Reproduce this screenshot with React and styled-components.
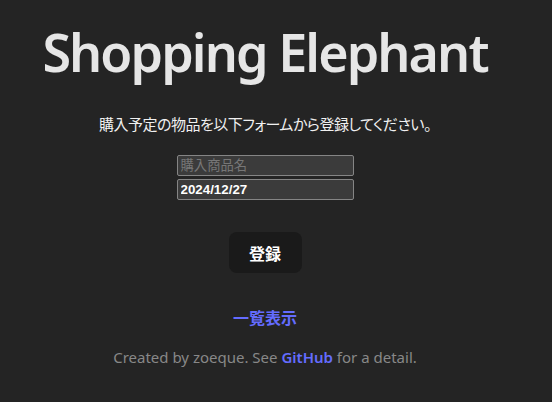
import React from "react";
import styled, { createGlobalStyle } from "styled-components";

const Global = createGlobalStyle`
  html, body { margin: 0; padding: 0; background: #242424; }
  body {
    font-family: "Noto Sans", "Noto Sans CJK JP", sans-serif;
    color: rgba(255, 255, 255, 0.87);
    -webkit-font-smoothing: antialiased;
  }
`;

const Page = styled.main`
  width: 530px;
  height: 402px;
  display: flex;
  flex-direction: column;
  align-items: center;
  text-align: center;
  box-sizing: border-box;
  padding-top: 22px;
`;

const Title = styled.h1`
  margin: 0;
  font-size: 52px;
  line-height: 60px;
  font-weight: 600;
  color: #e6e6e6;
  letter-spacing: -1.9px;
`;

const Lead = styled.p`
  margin: 31px 0 0;
  font-family: "Noto Sans CJK JP", sans-serif;
  font-feature-settings: "palt";
  font-size: 15px;
  line-height: 22px;
  letter-spacing: -0.5px;
  color: #f0f0f0;
`;

const Form = styled.form`
  margin-top: 20px;
  display: flex;
  flex-direction: column;
  align-items: center;
  gap: 3px;
`;

const Field = styled.input`
  box-sizing: border-box;
  width: 177px;
  height: 21px;
  margin: 0;
  padding: 1px 3px;
  background: #3b3b3b;
  border: 1px solid #858585;
  border-radius: 2px;
  color: #ffffff;
  font-family: "Liberation Sans", Arial, "Noto Sans CJK JP", sans-serif;
  font-size: 13.33px;
  font-weight: ${(p) => (p.$bold ? 700 : 400)};
  outline: none;
  &::placeholder {
    color: #777777;
    font-family: "Noto Sans CJK JP", sans-serif;
  }
`;

const Button = styled.button`
  margin-top: 32px;
  width: 73px;
  height: 41px;
  border: 1px solid transparent;
  border-radius: 8px;
  background: #1a1a1a;
  color: #ffffff;
  font-family: "Noto Sans CJK JP", sans-serif;
  font-size: 16px;
  font-weight: 700;
  cursor: pointer;
`;

const ListLink = styled.a`
  display: block;
  margin-top: 33px;
  font-family: "Noto Sans CJK JP", sans-serif;
  font-size: 16px;
  line-height: 22px;
  font-weight: 700;
  color: #646cff;
  text-decoration: none;
`;

const Footer = styled.p`
  margin: 18px 0 0;
  font-size: 15px;
  line-height: 22px;
  color: #888888;
`;

const Accent = styled.a`
  color: #646cff;
  font-weight: 600;
  text-decoration: none;
`;

export default function App() {
  return (
    <>
      <Global />
      <Page>
        <Title>Shopping Elephant</Title>
        <Lead>購入予定の物品を以下フォームから登録してください。</Lead>
        <Form onSubmit={(e) => e.preventDefault()}>
          <Field type="text" placeholder="購入商品名" />
          <Field type="text" defaultValue="2024/12/27" $bold />
        </Form>
        <Button type="button">登録</Button>
        <ListLink href="#">一覧表示</ListLink>
        <Footer>
          Created by zoeque. See <Accent href="#">GitHub</Accent> for a detail.
        </Footer>
      </Page>
    </>
  );
}
